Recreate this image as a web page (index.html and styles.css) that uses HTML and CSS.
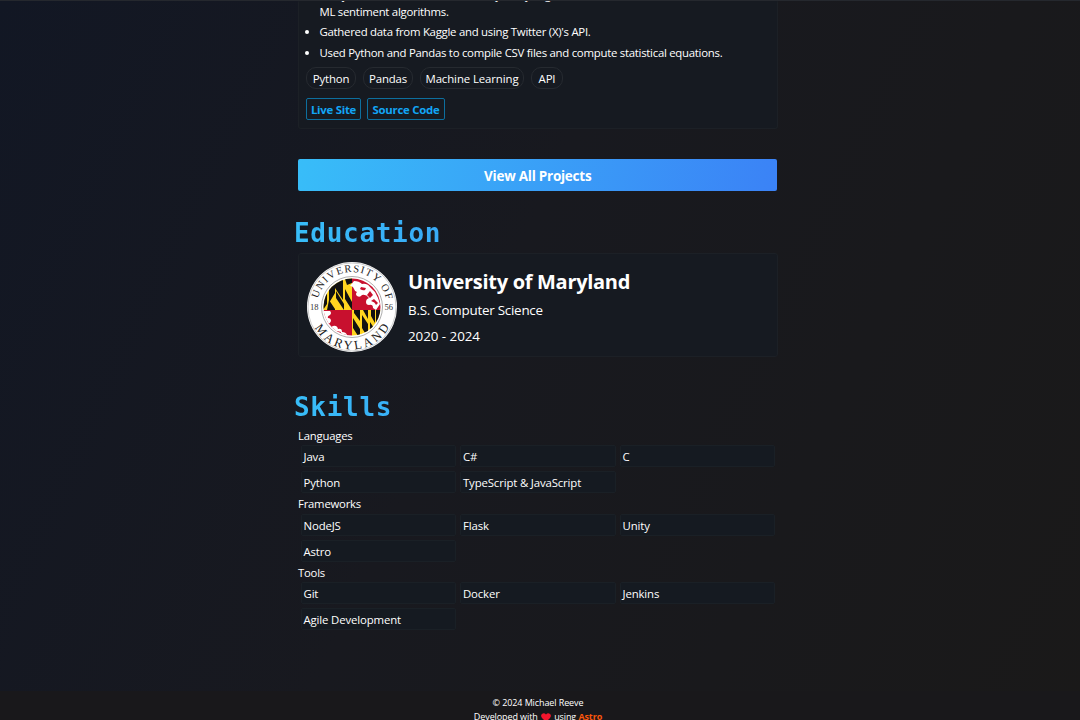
FILE: index.html
```html
<!DOCTYPE html>
<html lang="en">
<head>
<meta charset="utf-8">
<title>Michael Reeve</title>
<link rel="stylesheet" href="styles.css">
</head>
<body>
<main class="content">
  <section class="card project">
    <ul class="points">
      <li>Analyzed the trends of Twitter (X) by analyzing with<br>ML sentiment algorithms.</li>
      <li>Gathered data from Kaggle and using Twitter (X)'s API.</li>
      <li>Used Python and Pandas to compile CSV files and compute statistical equations.</li>
    </ul>
    <div class="tags"><span class="tag t1">Python</span><span class="tag t2">Pandas</span><span class="tag t3">Machine Learning</span><span class="tag t4">API</span></div>
    <div class="links"><a class="link l1">Live Site</a><a class="link l2">Source Code</a></div>
  </section>
  <a class="all">View All Projects</a>
  <h2 class="heading">Education</h2>
  <section class="card school">
    <svg class="seal" viewBox="0 0 90 90">
      <defs>
        <path id="top" d="M10 45A35 35 0 0 1 80 45"/>
        <path id="bottom" d="M2.500 45A42.500 42.500 0 0 0 87.500 45"/>
        <clipPath id="globe"><circle cx="45" cy="45" r="28.500"/></clipPath>
      </defs>
      <circle cx="45" cy="45" r="45" fill="#fff"/>
      <circle cx="45" cy="45" r="44" fill="none" stroke="#999" stroke-width=".5"/>
      <circle cx="45" cy="45" r="30.500" fill="none" stroke="#777" stroke-width=".6"/>
      <g clip-path="url(#globe)">
        <path fill="#ffd520" d="M15 15h30v33H15zM45 48h30v30H45z"/>
        <path fill="#c8102e" d="M45 15h30v33H45zM15 48h30v30H15z"/>
        <path d="M28 17L36 14V38L28 26zM37 14h8v7l-5 2zM38 27l7 13v8L38 37zM29 29l8 13v6L29 36zM22 25l6-6v12l-6 10zM22 38l6 9v1h-8zM15 34l5-4v12l-4 6zM47 48h6v11l-6-8zM46 56l7 11v10l-7-11zM55 53l6 9v14l-6-10zM56 48h5v9zM64 48h4v13l-4-7zM63 60l4 6v8h-4zM69 48h6v8l-6 6z" fill="#111"/>
        <path d="M47 19q5 0 8 3 5-1 8 3l5 5q3 5 5 12l-4 6-3-2q0-4-4-3-3 0-3-3 0-3 3-4-3-4-7-3-2 3-5 1-2-2 0-4-2 0-3-3-1-3-4-3zm7 6l-1 2q3 2 5 1l1-2zm9 4l-3 4 3 3 3-3zm4 8l-3 2q4 1 5 4l2-2z" fill="#fff" fill-rule="evenodd"/>
        <path d="M17 49h6q2 2 0 4-3 1-2 3 3 0 3 3-1 3-3 3 2 4 5 2 4-1 5 3 4-1 4 3 4 0 5 3v4l-9-1-9-6-6-9zm4 13l-1 2 3 3 2-2zm9 7l-1 3 4 1 1-3z" fill="#fff" fill-rule="evenodd"/>
      </g>
      <text class="ring"><textPath href="#top" startOffset="8.500" textLength="94">UNIVERSITY OF</textPath></text>
      <text class="ring low"><textPath href="#bottom" startOffset="21.500" textLength="91">MARYLAND</textPath></text>
      <text x="3" y="48" class="year">18</text><text x="77.500" y="48" class="year">56</text>
    </svg>
    <div class="degree"><h3>University of Maryland</h3><p>B.S. Computer Science</p><p>2020 - 2024</p></div>
  </section>
  <h2 class="heading skills-title">Skills</h2>
  <div class="skills">
    <h4>Languages</h4>
    <div class="grid"><span>Java</span><span>C#</span><span>C</span><span>Python</span><span>TypeScript &amp; JavaScript</span></div>
    <h4>Frameworks</h4>
    <div class="grid"><span>NodeJS</span><span>Flask</span><span>Unity</span><span>Astro</span></div>
    <h4>Tools</h4>
    <div class="grid"><span>Git</span><span>Docker</span><span>Jenkins</span><span>Agile Development</span></div>
  </div>
</main>
<footer class="footer">
  <div class="copy">© 2024 Michael Reeve</div>
  <div class="made">Developed with <svg class="heart" viewBox="0 0 10 9"><path d="M5 9L1 5Q-.8 2.500 1 1 3-.8 5 1.500 7-.8 9 1q1.800 1.500 0 4z" fill="#f5152d"/></svg> using <b>Astro</b></div>
</footer>
</body>
</html>
```
FILE: styles.css
```css
* { box-sizing: border-box; margin: 0; padding: 0; }
body {
  height: 720px; overflow: hidden; display: flex; flex-direction: column;
  background: linear-gradient(115deg, #121724 0%, #18191f 45%, #1a1919 100%);
  border-top: 1px solid #25282e; color: #fff;
  font: 11.4px/20px "Open Sans", "Noto Sans", sans-serif; letter-spacing: -.15px;
}
.content { width: 480px; height: 690px; margin-left: 298px; flex: none; }
.card { background: #161a21; border: 1px solid #1c2026; border-radius: 3px; }
.project { height: 129px; margin-top: -1px; border-top: 0; padding-left: 7px; overflow: hidden; display: flex; flex-direction: column; justify-content: flex-end; }
.points { padding-left: 13.500px; }
.points li { line-height: 17px; margin-bottom: 3.500px; white-space: nowrap; letter-spacing: -.27px; }
.tags { display: flex; gap: 7px; margin-top: 3px; }
.tag { height: 22px; line-height: 21px; border: 1px solid #262a30; border-radius: 10px; text-align: center; white-space: nowrap; }
.t1 { width: 50px; } .t2 { width: 50px; } .t3 { width: 104px; letter-spacing: -.1px; } .t4 { width: 32px; }
.links { display: flex; gap: 6px; margin: 9px 0 8px; }
.link { height: 22px; line-height: 21px; border: 1px solid #0d6f9e; border-radius: 2px; color: #12a5f5; font-weight: 700; text-align: center; letter-spacing: -.26px; }
.l1 { width: 55px; } .l2 { width: 78px; }
.all { display: block; height: 32px; margin-top: 30px; width: 479.400px; line-height: 34px; border-radius: 2px; background: linear-gradient(105deg, #38bdf8, #3b82f6); color: #fff; text-align: center; font-size: 13.500px; font-weight: 700; letter-spacing: -.25px; }
.heading { font: 700 26px/34px "DejaVu Sans Mono", monospace; height: 40px; padding-top: 6px; letter-spacing: .700px; width: 480px; margin: 19px 0 0 -4px; background: linear-gradient(to right, #38bdf8, #3b82f6); -webkit-background-clip: text; background-clip: text; color: transparent; }
.school { width: 480px; height: 104px; margin-top: 3px; display: flex; align-items: center; padding: 3px 0 0 7.500px; }
.seal { width: 90px; height: 90px; flex: none; margin-right: 11.500px; letter-spacing: 0; }
.ring { font: 10.500px "Liberation Serif", serif; fill: #222; }
.low { font-size: 12.500px; }
.year { font: 8.500px "Liberation Serif", serif; fill: #333; }
.degree { padding-top: 3px; }
.degree h3 { font-size: 20px; line-height: 30px; letter-spacing: -.3px; color: #fff; }
.degree p { font-size: 13.400px; line-height: 26px; letter-spacing: -.24px; }
.degree p:last-child { letter-spacing: -.05px; }
.skills-title { margin-top: 27px; }
.skills { padding-top: 3px; }
.skills h4 { font-weight: 400; font-size: 11.300px; line-height: 18px; height: 17.300px; letter-spacing: -.2px; }
.grid { display: grid; grid-template-columns: repeat(3, 155.500px); gap: 4px; padding: 1px 0 0 2.500px; margin-bottom: 2px; }
.grid span { height: 22px; line-height: 21px; background: #151a21; border: 1px solid #1a2026; border-radius: 2px; padding-left: 2px; }
.footer { flex: 1; background: #19181b; text-align: center; font-size: 9px; line-height: 14px; padding-top: 5px; padding-right: 4px; letter-spacing: -.1px; }
.heart { width: 10px; height: 9px; vertical-align: -2px; margin: 0 1px; }
.made b { color: #f9560b; }
```
